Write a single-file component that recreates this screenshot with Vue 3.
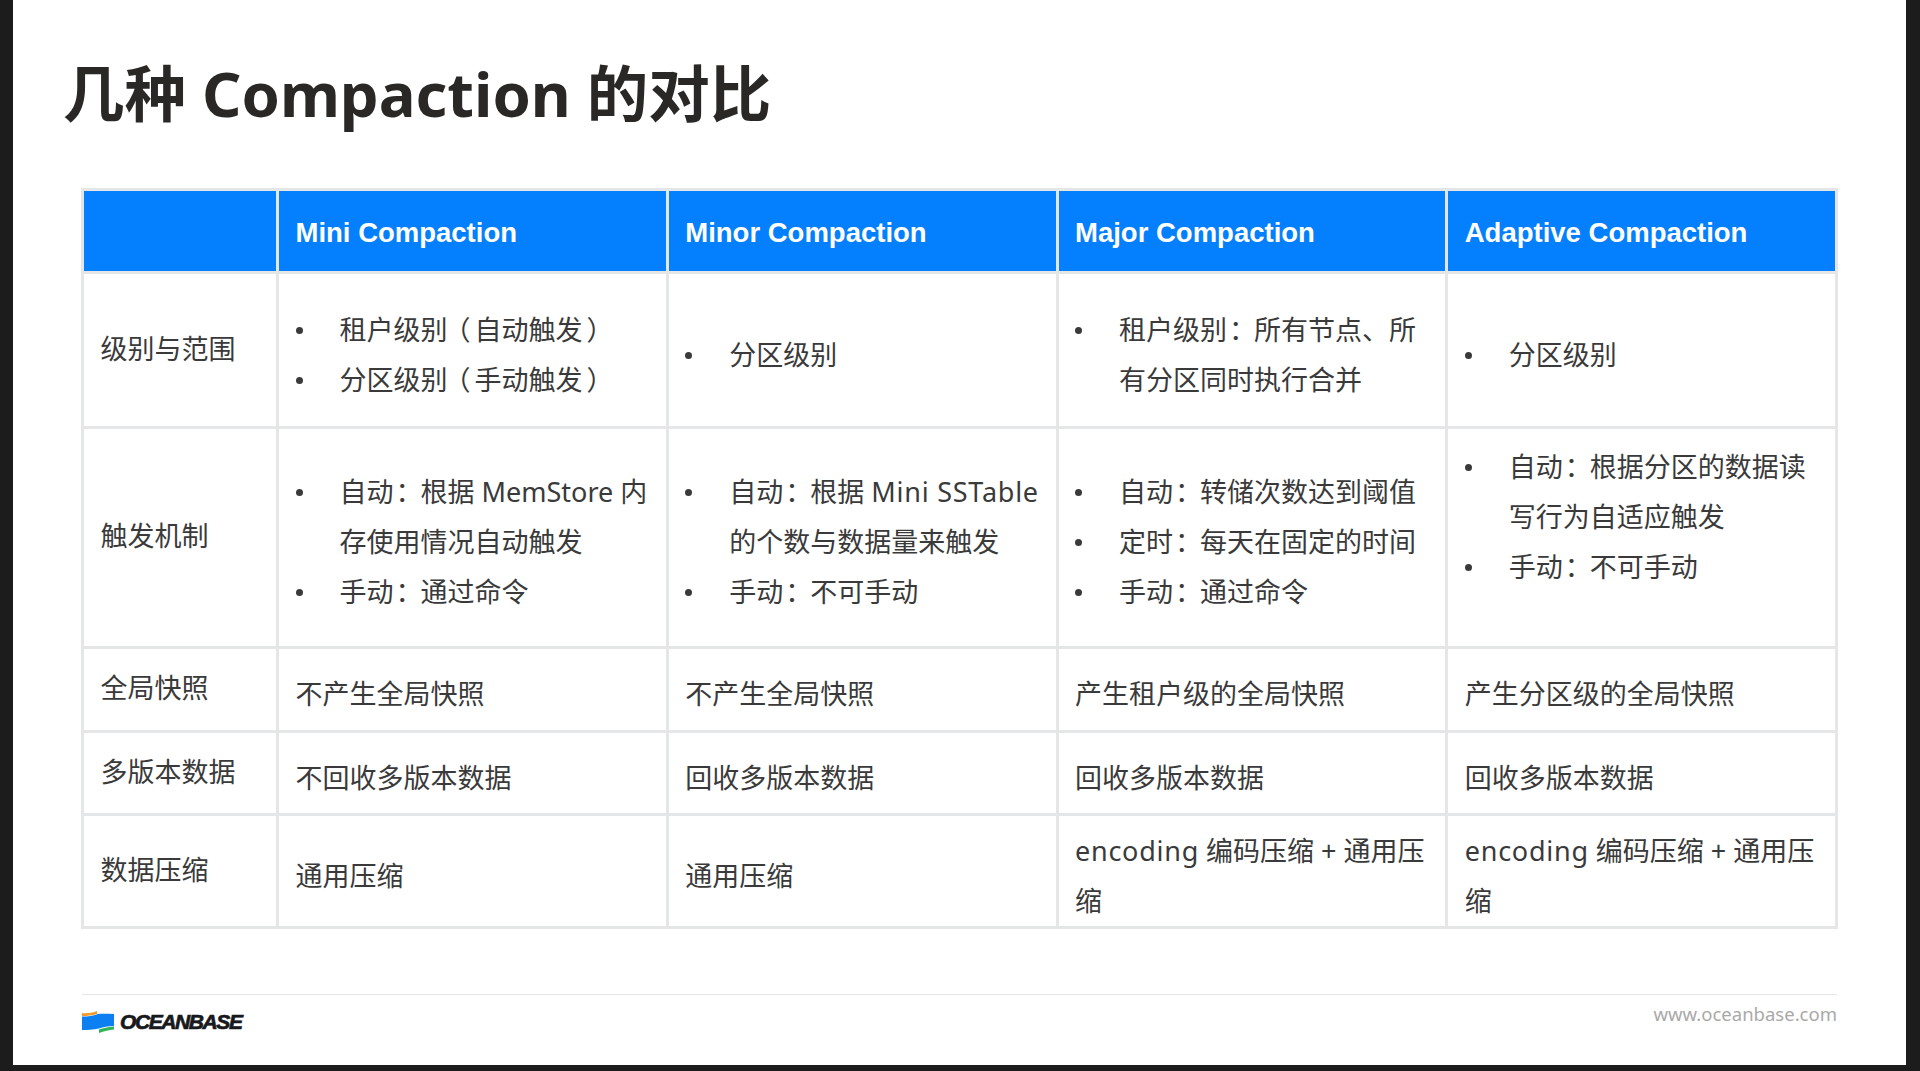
<script setup>
const headers = ['Mini Compaction', 'Minor Compaction', 'Major Compaction', 'Adaptive Compaction']
const rows = [
  {
    label: '级别与范围',
    cls: 'row-scope',
    cells: [
      { list: ['租户级别（自动触发）', '分区级别（手动触发）'] },
      { list: ['分区级别'] },
      { list: ['租户级别：所有节点、所有分区同时执行合并'] },
      { list: ['分区级别'] }
    ]
  },
  {
    label: '触发机制',
    cls: 'row-trigger',
    cells: [
      { list: ['自动：根据 MemStore 内存使用情况自动触发', '手动：通过命令'] },
      { list: ['自动：根据 Mini SSTable 的个数与数据量来触发', '手动：不可手动'] },
      { list: ['自动：转储次数达到阈值', '定时：每天在固定的时间', '手动：通过命令'] },
      { list: ['自动：根据分区的数据读写行为自适应触发', '手动：不可手动'], raised: true }
    ]
  },
  {
    label: '全局快照',
    cls: 'row-snap',
    cells: [{ text: '不产生全局快照' }, { text: '不产生全局快照' }, { text: '产生租户级的全局快照' }, { text: '产生分区级的全局快照' }]
  },
  {
    label: '多版本数据',
    cls: 'row-ver',
    cells: [{ text: '不回收多版本数据' }, { text: '回收多版本数据' }, { text: '回收多版本数据' }, { text: '回收多版本数据' }]
  },
  {
    label: '数据压缩',
    cls: 'row-zip',
    cells: [{ text: '通用压缩' }, { text: '通用压缩' }, { text: 'encoding 编码压缩 + 通用压缩' }, { text: 'encoding 编码压缩 + 通用压缩' }]
  }
]
const tone = { encoding: 'wide', 'Mini SSTable': 'wide', '（': 'open', '）': 'close', '：': 'colon' }
const parts = (s) => s.split(/(encoding|Mini SSTable|（|）|：)/).filter(Boolean)
</script>

<template>
  <div class="screen">
    <main class="slide">
      <h1 class="title">几种 Compaction 的对比</h1>
      <table class="grid">
        <colgroup>
          <col class="col-label" />
          <col class="col-data" />
          <col class="col-data" />
          <col class="col-data" />
          <col class="col-data" />
        </colgroup>
        <thead>
          <tr>
            <th></th>
            <th v-for="h in headers" :key="h">{{ h }}</th>
          </tr>
        </thead>
        <tbody>
          <tr v-for="r in rows" :key="r.label" :class="r.cls">
            <td class="label">{{ r.label }}</td>
            <td v-for="(c, i) in r.cells" :key="i" :class="{ raised: c.raised }">
              <ul v-if="c.list" class="bullets">
                <li v-for="item in c.list" :key="item"><span><span v-for="(p, k) in parts(item)" :key="k" :class="tone[p]">{{ p }}</span></span></li>
              </ul>
              <template v-else><span v-for="(p, k) in parts(c.text)" :key="k" :class="tone[p]">{{ p }}</span></template>
            </td>
          </tr>
        </tbody>
      </table>
      <footer class="foot">
        <div class="brand">
          <svg class="mark" width="32" height="22" viewBox="0 0 32 22" aria-hidden="true">
            <path d="M0 2 C5 2.5 10 2 15 0 L15 3 C10 4.5 5 5 0 5 Z" fill="#f19a2a" />
            <path d="M0 5.5 C6 5.5 11 5 16 3 C21 2.5 27 3 32 3 L32 15 C26 15 21 16 17 17.5 C11 18.5 5 19 0 19 Z" fill="#0c7ff2" />
            <path d="M17 18.5 C21 17 26 16 32 15.5 L32 18.5 C27 19 22 20 17 22 Z" fill="#2fb457" />
          </svg>
          <span class="word">OCEANBASE</span>
        </div>
        <span class="url">www.oceanbase.com</span>
      </footer>
    </main>
  </div>
</template>

<style>
html, body { margin: 0; background: #1c1c1c; }
</style>

<style scoped>
.screen {
  width: 1920px;
  height: 1071px;
  background: #1c1c1c;
  overflow: hidden;
  font-family: "Noto Sans", "Noto Sans CJK SC", sans-serif;
}
.slide {
  box-sizing: border-box;
  width: 1893px;
  height: 1065px;
  margin-left: 13px;
  padding: 51px 70px 0 68px;
  background: #fff;
  overflow: hidden;
}
.title {
  margin: 0 0 0 -18px;
  height: 85px;
  font-size: 61.5px;
  line-height: 85px;
  font-weight: 700;
  color: #2a2826;
  font-family: "Noto Sans", "Noto Sans CJK SC", sans-serif;
}
.grid {
  margin-top: 52px;
  width: 1754px;
  table-layout: fixed;
  border-collapse: collapse;
  color: #3a3a3a;
  font-size: 27px;
  line-height: 50px;
}
.col-label { width: 195px; }
.col-data { width: 389.75px; }
th, td {
  box-sizing: border-box;
  border: 3px solid #e5e6e8;
  padding: 0 10px 0 16.5px;
  text-align: left;
  vertical-align: middle;
}
th {
  height: 83px;
  padding-top: 3px;
  background: #0480ff;
  color: #fff;
  font-family: "Liberation Sans", sans-serif;
  font-size: 27.5px;
  font-weight: 700;
}
td { padding-top: 9px; }
td.label { padding-top: 0; padding-bottom: 3px; }
td.raised { padding-top: 0; padding-bottom: 41px; }
.row-scope td { height: 155px; }
.row-trigger td { height: 220px; }
.row-snap td { height: 84px; }
.row-ver td { height: 83px; }
.row-zip td { height: 113px; }
.wide { letter-spacing: 0.75px; }
.open, .close, .colon { display: inline-block; }
.open { transform: translateX(-4px); }
.close { transform: translateX(4px); }
.colon { transform: translateX(2px); }
.bullets { list-style: none; margin: 0; padding: 0; }
.bullets li { display: flex; align-items: flex-start; }
.bullets li::before {
  content: "";
  flex: none;
  width: 7px;
  height: 7px;
  margin: 22px 37px 0 0;
  border-radius: 50%;
  background: #3a3a3a;
}
.foot {
  margin-top: 65px;
  margin-left: 1px;
  width: 1755px;
  padding-top: 7px;
  border-top: 1px solid #e6e6e6;
  display: flex;
  justify-content: space-between;
  align-items: flex-start;
}
.brand { display: flex; align-items: center; gap: 6px; margin-top: 9px; }
.mark { display: block; }
.word {
  font-family: "Liberation Sans", sans-serif;
  font-style: italic;
  font-weight: 700;
  font-size: 21px;
  line-height: 22px;
  letter-spacing: -1.4px;
  color: #17191c;
  -webkit-text-stroke: 0.7px #17191c;
}
.url {
  font-size: 18.5px;
  line-height: 24px;
  color: #a9a9a9;
}
</style>
